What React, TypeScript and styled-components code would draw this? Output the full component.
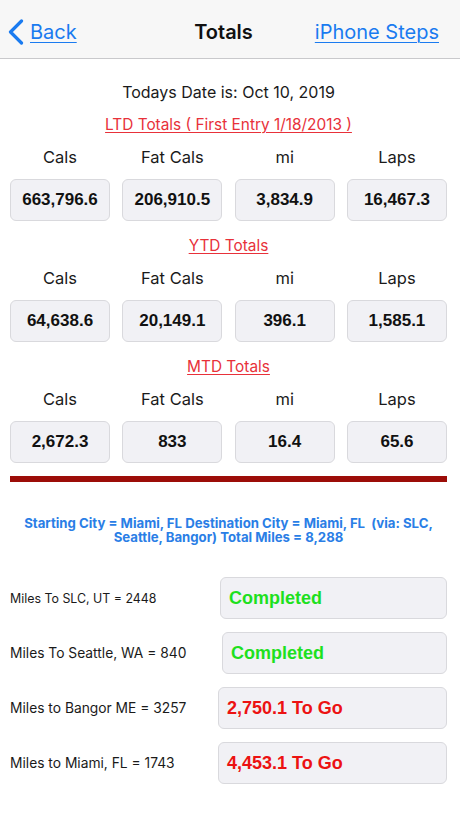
import React from "react";
import styled, { createGlobalStyle } from "styled-components";

const GlobalStyle = createGlobalStyle`
  html, body {
    margin: 0;
    padding: 0;
    background: #ffffff;
  }
  body {
    font-family: Inter, "Noto Sans", "Liberation Sans", sans-serif;
    -webkit-font-smoothing: antialiased;
  }
`;

const Page = styled.div`
  width: 460px;
  min-height: 818px;
  background: #ffffff;
`;

const NavBar = styled.header`
  height: 59px;
  box-sizing: border-box;
  background: #f7f7f7;
  border-bottom: 1px solid #c9c9cc;
  display: grid;
  grid-template-columns: 1fr auto 1fr;
  align-items: center;
  padding: 6px 21px 0 8px;
`;

const BackLink = styled.a`
  display: flex;
  align-items: center;
  gap: 6px;
  color: #1a7bf0;
  font-size: 20px;
  text-decoration: underline;
  text-underline-offset: 3px;
  text-decoration-thickness: 1px;
`;

const NavTitle = styled.div`
  font-size: 20px;
  font-weight: 600;
  color: #111;
`;

const NavRight = styled.a`
  justify-self: end;
  color: #1a7bf0;
  font-size: 20px;
  text-decoration: underline;
  text-underline-offset: 3px;
  text-decoration-thickness: 1px;
`;

const Content = styled.main`
  padding: 21px 13px 0 10px;
  display: flex;
  flex-direction: column;
`;

const DateLine = styled.div`
  text-align: center;
  font-size: 16px;
  line-height: 24px;
  color: #1a1a1a;
  margin-bottom: 9px;
`;

const Section = styled.section`
  display: flex;
  flex-direction: column;
  & + & {
    margin-top: 13px;
  }
`;

const Heading = styled.div`
  text-align: center;
  font-size: 15.4px;
  line-height: 24px;
  color: #e8313a;
  text-decoration: underline;
  text-underline-offset: 2px;
  text-decoration-thickness: 1px;
  margin-bottom: 9px;
`;

const Grid = styled.div`
  display: grid;
  grid-template-columns: repeat(4, 100px);
  justify-content: space-between;
`;

const ColLabel = styled.div`
  text-align: center;
  font-size: 16.5px;
  line-height: 22px;
  color: #1a1a1a;
  margin-bottom: 11px;
`;

const ValueBox = styled.div`
  height: 42px;
  box-sizing: border-box;
  border: 1px solid #d9d9dd;
  border-radius: 6px;
  background: #f1f1f5;
  display: flex;
  align-items: center;
  justify-content: center;
  font-family: "Liberation Sans", Arial, sans-serif;
  font-weight: 700;
  font-size: 17px;
  color: #111;
`;

const Divider = styled.div`
  height: 6px;
  background: #9c0d08;
  margin-top: 13px;
`;

const RouteText = styled.p`
  margin: 34px 0 0;
  text-align: center;
  font-size: 13.2px;
  line-height: 14px;
  font-weight: 700;
  color: #2a7ee6;
  white-space: pre;
`;

const Legs = styled.div`
  display: flex;
  flex-direction: column;
  gap: 13px;
  margin-top: 33px;
`;

const LegRow = styled.div`
  display: flex;
  align-items: center;
`;

const LegLabel = styled.div<{ $size: number }>`
  width: 208px;
  font-size: ${(p) => p.$size}px;
  color: #1a1a1a;
`;

const LegBox = styled.div<{ $shift: number; $done: boolean }>`
  flex: 1;
  margin-left: ${(p) => p.$shift}px;
  height: 42px;
  box-sizing: border-box;
  border: 1px solid #d9d9dd;
  border-radius: 6px;
  background: #f1f1f5;
  display: flex;
  align-items: center;
  padding-left: 8px;
  font-family: "Liberation Sans", Arial, sans-serif;
  font-weight: 700;
  font-size: 18px;
  color: ${(p) => (p.$done ? "#1ee01e" : "#ec1212")};
`;

const sections = [
  {
    title: "LTD Totals ( First Entry 1/18/2013 )",
    values: ["663,796.6", "206,910.5", "3,834.9", "16,467.3"],
  },
  { title: "YTD Totals", values: ["64,638.6", "20,149.1", "396.1", "1,585.1"] },
  { title: "MTD Totals", values: ["2,672.3", "833", "16.4", "65.6"] },
];

const columns = ["Cals", "Fat Cals", "mi", "Laps"];

const legs = [
  { label: "Miles To SLC, UT = 2448", size: 12.4, value: "Completed", done: true, shift: 2 },
  { label: "Miles To Seattle, WA = 840", size: 13.8, value: "Completed", done: true, shift: 4 },
  { label: "Miles to Bangor ME = 3257", size: 13.8, value: "2,750.1 To Go", done: false, shift: 0 },
  { label: "Miles to Miami, FL = 1743", size: 13.8, value: "4,453.1 To Go", done: false, shift: 0 },
];

function Chevron() {
  return (
    <svg width="16" height="26" viewBox="0 0 16 26">
      <polyline
        points="13.5,2 2.5,13 13.5,24"
        fill="none"
        stroke="#1a7bf0"
        strokeWidth="3.2"
        strokeLinecap="round"
        strokeLinejoin="round"
      />
    </svg>
  );
}

export default function App() {
  return (
    <Page>
      <GlobalStyle />
      <NavBar>
        <BackLink>
          <Chevron />
          Back
        </BackLink>
        <NavTitle>Totals</NavTitle>
        <NavRight>iPhone Steps</NavRight>
      </NavBar>
      <Content>
        <DateLine>Todays Date is: Oct 10, 2019</DateLine>
        {sections.map((s) => (
          <Section key={s.title}>
            <Heading>{s.title}</Heading>
            <Grid>
              {columns.map((c) => (
                <ColLabel key={c}>{c}</ColLabel>
              ))}
              {s.values.map((v, i) => (
                <ValueBox key={i}>{v}</ValueBox>
              ))}
            </Grid>
          </Section>
        ))}
        <Divider />
        <RouteText>
          {"Starting City = Miami, FL Destination City = Miami, FL  (via: SLC,\nSeattle, Bangor) Total Miles = 8,288"}
        </RouteText>
        <Legs>
          {legs.map((l) => (
            <LegRow key={l.label}>
              <LegLabel $size={l.size}>{l.label}</LegLabel>
              <LegBox $shift={l.shift} $done={l.done}>
                {l.value}
              </LegBox>
            </LegRow>
          ))}
        </Legs>
      </Content>
    </Page>
  );
}
